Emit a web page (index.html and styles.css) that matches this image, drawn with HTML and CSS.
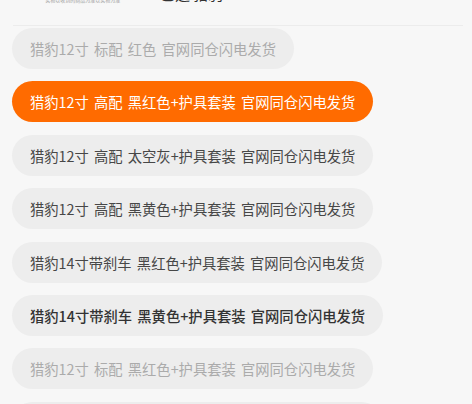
FILE: index.html
```html
<!DOCTYPE html>
<html lang="zh">
<head>
<meta charset="utf-8">
<link rel="stylesheet" href="styles.css">
</head>
<body>
<div class="page">
  <div class="head">
    <div class="thumb">
      <div class="thumb-note">*实物以收到的商品为准以实物为准</div>
    </div>
    <div class="head-title">已选 猎豹</div>
  </div>
  <div class="divider"></div>
  <div class="options">
    <div class="pill disabled">猎豹12寸 标配 红色 官网同仓闪电发货</div>
    <div class="pill active">猎豹12寸 高配 黑红色+护具套装 官网同仓闪电发货</div>
    <div class="pill">猎豹12寸 高配 太空灰+护具套装 官网同仓闪电发货</div>
    <div class="pill">猎豹12寸 高配 黑黄色+护具套装 官网同仓闪电发货</div>
    <div class="pill">猎豹14寸带刹车 黑红色+护具套装 官网同仓闪电发货</div>
    <div class="pill strong">猎豹14寸带刹车 黑黄色+护具套装 官网同仓闪电发货</div>
    <div class="pill disabled">猎豹12寸 标配 黑红色+护具套装 官网同仓闪电发货</div>
    <div class="pill">猎豹14寸带刹车 太空灰+护具套装 官网同仓闪电发货</div>
  </div>
</div>
</body>
</html>
```
FILE: styles.css
```css
html, body {
  margin: 0;
  padding: 0;
  background: #f7f7f7;
  overflow: hidden;
}
.page {
  width: 472px;
  height: 404px;
  overflow: hidden;
  font-family: "Noto Sans CJK SC", "Noto Sans", sans-serif;
}
.head {
  display: flex;
  align-items: flex-start;
  height: 45px;
  margin-top: -20px;
  padding: 0 13px;
  box-sizing: border-box;
}
.thumb {
  width: 130px;
  height: 45px;
  display: flex;
  justify-content: flex-start;
  padding-left: 30px;
  box-sizing: border-box;
}
.thumb-note {
  font-size: 5px;
  line-height: 6px;
  color: #9a9a9a;
  margin-top: 17px;
  white-space: nowrap;
}
.head-title {
  margin-left: 17px;
  margin-top: 5px;
  font-size: 15px;
  line-height: 18px;
  color: #333;
  white-space: nowrap;
}
.divider {
  height: 1px;
  background: #ececec;
  margin: 0 9px 0 13px;
}
.options {
  display: flex;
  flex-direction: column;
  align-items: flex-start;
  gap: 12.4px;
  padding: 2px 12px 0;
}
.pill {
  height: 41px;
  line-height: 41px;
  padding: 0 18px;
  border-radius: 20.5px;
  background: #ededed;
  color: #474747;
  font-size: 14.3px;
  word-spacing: 2px;
  white-space: nowrap;
}
.pill.active {
  background: #ff6b00;
  color: #fff;
}
.pill.disabled {
  color: #ababab;
}
.pill.strong {
  color: #333;
  font-weight: 500;
}
```
